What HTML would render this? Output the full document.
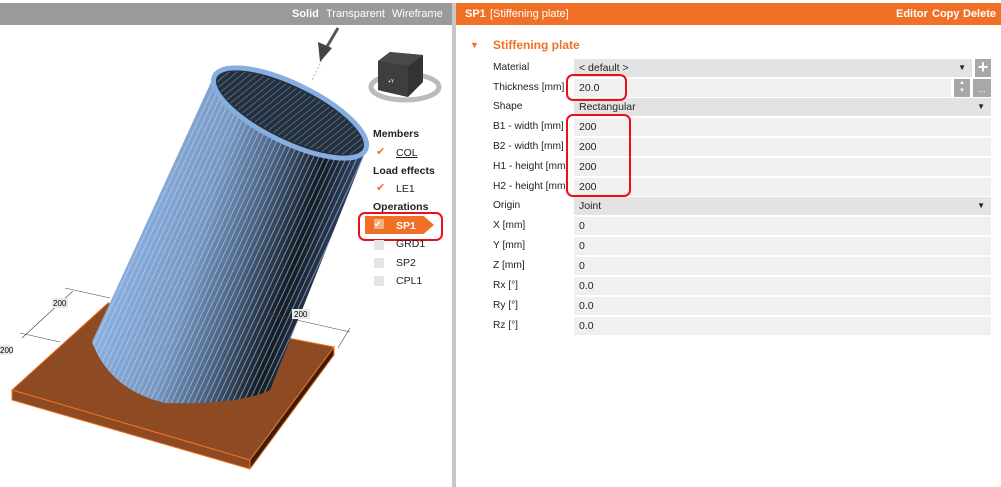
<!DOCTYPE html>
<html><head><meta charset="utf-8"><style>
*{margin:0;padding:0;box-sizing:border-box}
body{width:1001px;height:487px;background:#fff;font-family:"Liberation Sans",sans-serif;font-size:11px;color:#222;position:relative;overflow:hidden}
.abs{position:absolute}
.hdr{top:3px;height:22px;color:#fff;font-size:11px;line-height:22px}
.lbl{left:493px;width:80px;white-space:nowrap;overflow:hidden;height:18px;line-height:18px;font-size:10.2px}
.fld{left:574px;height:18px;line-height:18px;background:#f0f0f0;padding-left:5px;font-size:10.5px}
.dd{background:#e3e3e3}
.arr{position:absolute;right:6px;top:0;font-size:8px}
.red{border:2.5px solid #e8101a;border-radius:7px}
.tree{font-size:10.5px}
.cb{width:10px;height:10px;background:#e4e4e4;position:absolute}
</style></head><body>
<div class="abs hdr" style="left:0;width:452px;background:#9a9a9a"></div>
<div class="abs hdr" style="left:292px;font-weight:bold">Solid</div>
<div class="abs hdr" style="left:326px">Transparent</div>
<div class="abs hdr" style="left:392px">Wireframe</div>
<div class="abs" style="left:452px;top:3px;width:4px;height:484px;background:#c8c8c8"></div>
<div class="abs hdr" style="left:456px;width:545px;background:#f07125"></div>
<div class="abs hdr" style="left:465px;font-weight:bold">SP1</div>
<div class="abs hdr" style="left:490px">[Stiffening plate]</div>
<div class="abs hdr" style="left:896px;font-weight:bold">Editor</div>
<div class="abs hdr" style="left:932px;font-weight:bold">Copy</div>
<div class="abs hdr" style="left:963px;font-weight:bold">Delete</div>

<div class="abs" style="left:470px;top:40px;color:#f07125;font-size:9px">▼</div>
<div class="abs" style="left:493px;top:38px;color:#f07125;font-weight:bold;font-size:12px">Stiffening plate</div>

<div class="abs lbl" style="top:59px">Material</div>
<div class="abs fld dd" style="top:59px;width:398px">&lt; default &gt;<span class="arr">▼</span></div>
<div class="abs" style="left:975px;top:59px;width:16px;height:18px;background:#a8a8a8;color:#fff;font-size:18px;line-height:17px;text-align:center;font-weight:bold">+</div>
<div class="abs lbl" style="top:79px">Thickness [mm]</div>
<div class="abs fld" style="top:79px;width:377px">20.0</div>
<div class="abs" style="left:954px;top:79px;width:16px;height:18px;background:#a8a8a8;color:#fff;font-size:7px;line-height:8px;text-align:center">▴<br>▾</div>
<div class="abs" style="left:973px;top:79px;width:18px;height:18px;background:#a8a8a8;color:#fff;font-size:9px;line-height:20px;text-align:center">...</div>
<div class="abs lbl" style="top:98px">Shape</div>
<div class="abs fld dd" style="top:98px;width:417px">Rectangular<span class="arr">▼</span></div>
<div class="abs lbl" style="top:118px">B1 - width [mm]</div>
<div class="abs fld" style="top:118px;width:417px">200</div>
<div class="abs lbl" style="top:138px">B2 - width [mm]</div>
<div class="abs fld" style="top:138px;width:417px">200</div>
<div class="abs lbl" style="top:158px">H1 - height [mm]</div>
<div class="abs fld" style="top:158px;width:417px">200</div>
<div class="abs lbl" style="top:178px">H2 - height [mm]</div>
<div class="abs fld" style="top:178px;width:417px">200</div>
<div class="abs lbl" style="top:197px">Origin</div>
<div class="abs fld dd" style="top:197px;width:417px">Joint<span class="arr">▼</span></div>
<div class="abs lbl" style="top:217px">X [mm]</div>
<div class="abs fld" style="top:217px;width:417px">0</div>
<div class="abs lbl" style="top:237px">Y [mm]</div>
<div class="abs fld" style="top:237px;width:417px">0</div>
<div class="abs lbl" style="top:257px">Z [mm]</div>
<div class="abs fld" style="top:257px;width:417px">0</div>
<div class="abs lbl" style="top:277px">Rx [°]</div>
<div class="abs fld" style="top:277px;width:417px">0.0</div>
<div class="abs lbl" style="top:297px">Ry [°]</div>
<div class="abs fld" style="top:297px;width:417px">0.0</div>
<div class="abs lbl" style="top:317px">Rz [°]</div>
<div class="abs fld" style="top:317px;width:417px">0.0</div>

<div class="abs red" style="left:566px;top:74px;width:61px;height:27px"></div>
<div class="abs red" style="left:566px;top:114px;width:65px;height:83px"></div>

<svg class="abs" style="left:0;top:25px" width="452" height="462" viewBox="0 25 452 462">
<defs>
<linearGradient id="cy" gradientUnits="userSpaceOnUse" x1="120" y1="200" x2="330" y2="260">
<stop offset="0" stop-color="#8fb4e4"/><stop offset="0.4" stop-color="#7896c0"/><stop offset="0.62" stop-color="#4c6280"/><stop offset="0.85" stop-color="#141a22"/><stop offset="1" stop-color="#2e405a"/></linearGradient>
<pattern id="st" width="5" height="6" patternUnits="userSpaceOnUse" patternTransform="rotate(25)"><rect width="1" height="6" fill="#bcdcff" opacity="0.55"/></pattern>
</defs>
<polygon points="12,390 108,303 334,347 250,460" fill="#8e4b23" stroke="#f07125"/>
<polygon points="12,390 250,460 250,469 12,400" fill="#8e4b23" stroke="#f07125"/>
<polygon points="250,460 334,347 334,355 250,469" fill="#3a1e0c" stroke="#f07125"/>
<path d="M212,80 L92,342 Q110,390 165,403 Q240,405 270,390 L366,150 Z" fill="url(#cy)"/>
<path d="M212,80 L92,342 Q110,390 165,403 Q240,405 270,390 L366,150 Z" fill="url(#st)"/>
<ellipse cx="290" cy="113" rx="84" ry="29" transform="rotate(26 290 113)" fill="#24303e" stroke="#86aee0" stroke-width="5"/>
<ellipse cx="290" cy="113" rx="80" ry="25" transform="rotate(26 290 113)" fill="url(#st)" opacity="0.6"/>
<line x1="338" y1="28" x2="325" y2="50" stroke="#555" stroke-width="3"/>
<polygon points="318,42 332,48 320,62" fill="#444"/>
<line x1="322" y1="60" x2="312" y2="80" stroke="#9bc" stroke-dasharray="2 2"/>
<line x1="65" y1="288" x2="110" y2="298" stroke="#444" stroke-width="0.6"/>
<line x1="20" y1="333" x2="60" y2="342" stroke="#444" stroke-width="0.6"/>
<line x1="22" y1="338" x2="73" y2="291" stroke="#444" stroke-width="0.6"/>
<rect x="52" y="298" width="16" height="10" fill="#e8e8e8"/><text x="53" y="306" font-size="8">200</text>
<rect x="0" y="345" width="12" height="10" fill="#e8e8e8"/><text x="0" y="353" font-size="8">200</text>
<line x1="270" y1="314" x2="350" y2="332" stroke="#444" stroke-width="0.6"/>
<line x1="350" y1="328" x2="338" y2="348" stroke="#444" stroke-width="0.6"/>
<rect x="292" y="309" width="18" height="10" fill="#e8e8e8"/><text x="294" y="317" font-size="8">200</text>
<ellipse cx="405" cy="87" rx="34" ry="13" fill="none" stroke="#bbb" stroke-width="5"/>
<polygon points="378,61 390,52 423,55 423,82 408,97 378,90" fill="#333"/>
<polygon points="378,61 408,66 408,97 378,90" fill="#3e3e3e"/>
<polygon points="378,61 390,52 423,55 408,66" fill="#4a4a4a"/>
<text x="388" y="83" font-size="5" fill="#fff">+Y</text>
</svg>

<div class="abs tree" style="left:373px;top:128px;font-weight:bold">Members</div>
<div class="abs" style="left:376px;top:145px;color:#f07125;font-size:11px">✔</div>
<div class="abs tree" style="left:396px;top:147px;text-decoration:underline">COL</div>
<div class="abs tree" style="left:373px;top:165px;font-weight:bold">Load effects</div>
<div class="abs" style="left:376px;top:181px;color:#f07125;font-size:11px">✔</div>
<div class="abs tree" style="left:396px;top:183px">LE1</div>
<div class="abs tree" style="left:373px;top:201px;font-weight:bold">Operations</div>
<div class="abs" style="left:365px;top:216px;width:69px;height:18px;background:#f07125;clip-path:polygon(0 0,85% 0,100% 50%,85% 100%,0 100%)"></div>
<div class="abs" style="left:374px;top:219px;width:10px;height:10px;background:#f5b07e;color:#fff;font-size:9px;line-height:10px">✔</div>
<div class="abs tree" style="left:396px;top:220px;color:#fff;font-weight:bold">SP1</div>
<div class="abs red" style="left:358px;top:212px;width:85px;height:29px"></div>
<div class="cb" style="left:374px;top:240px"></div><div class="abs tree" style="left:396px;top:238px">GRD1</div>
<div class="cb" style="left:374px;top:258px"></div><div class="abs tree" style="left:396px;top:257px">SP2</div>
<div class="cb" style="left:374px;top:276px"></div><div class="abs tree" style="left:396px;top:275px">CPL1</div>
</body></html>
